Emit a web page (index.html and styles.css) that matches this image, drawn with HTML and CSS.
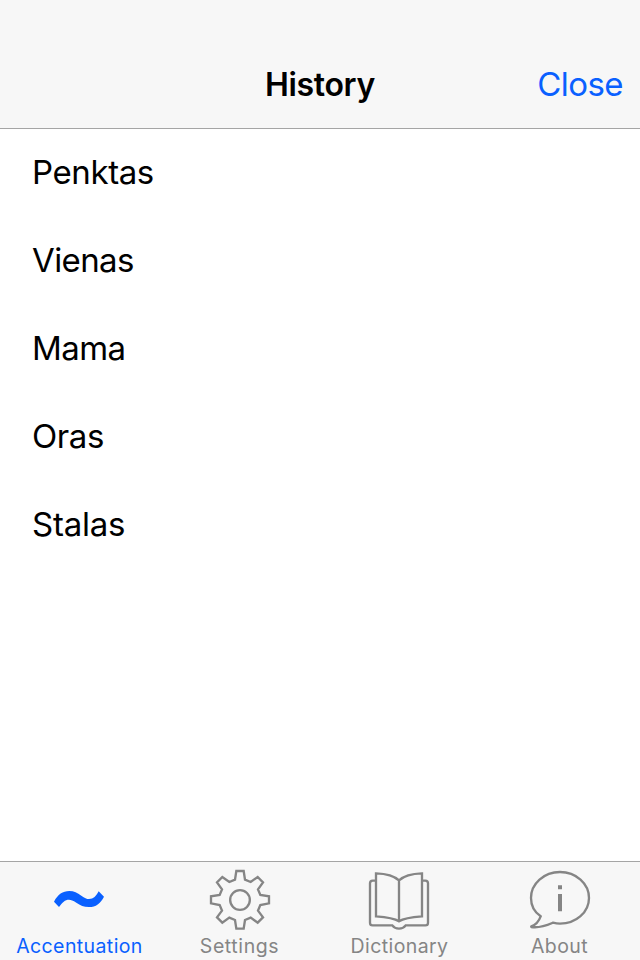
FILE: index.html
```html
<!DOCTYPE html>
<html lang="en">
<head>
<meta charset="utf-8">
<title>History</title>
<link rel="stylesheet" href="styles.css">
</head>
<body>
<div class="screen">
  <header class="navbar">
    <h1 class="title">History</h1>
    <a class="close">Close</a>
  </header>
  <ul class="list">
    <li class="row">Penktas</li>
    <li class="row vienas">Vienas</li>
    <li class="row mama">Mama</li>
    <li class="row">Oras</li>
    <li class="row stalas">Stalas</li>
  </ul>
  <nav class="tabbar">
    <a class="tab active">
      <svg class="icon" viewBox="144 39 192 192"><path fill="currentColor" d="M162 140C174 118 188 108 208 108C222 108 232 114 244 122C254 129 260 132 267 132C281 132 288 124 296 109L312 125C301 146 288 156 267 156C251 156 241 151 229 143C219 136 213 134 207 134C195 134 187 142 177 156Z"/></svg>
      <span class="label">Accentuation</span>
    </a>
    <a class="tab">
      <svg class="icon outline" viewBox="144 39 192 192"><path d="M229 48H251L255 74L272 81L293 66L309 82L294 103L301 120L327 124V145L301 150L294 167L309 187L293 203L272 188L255 195L251 221H229L225 195L208 188L187 203L171 187L186 167L179 150L153 145V124L179 120L186 103L171 82L187 66L208 81L225 74Z"/><circle cx="240" cy="135" r="29.5"/></svg>
      <span class="label settings">Settings</span>
    </a>
    <a class="tab">
      <svg class="icon outline" viewBox="144 39 192 192"><path d="M237 76C222 62 198 56 168 55V184C198 186 221 188 237 199C253 188 276 186 306 184V55C276 56 252 62 237 76V199"/><path d="M168 77H158Q150 77 150 85V203Q150 211 158 211H217Q224 221 237 221Q250 221 257 211H316Q324 211 324 203V85Q324 77 316 77H306"/></svg>
      <span class="label">Dictionary</span>
    </a>
    <a class="tab">
      <svg class="icon outline" viewBox="144 39 192 192"><path d="M182 184C163 171 153 151 153 129C153 86 192 51 240 51S327 86 327 129S288 206 240 206Q230 206 219 203C203 210 182 220 154 216Q153 215 154 214C168 209 177 198 182 184Z"/><path class="solid" d="M234 91H246V103H234ZM234 117H246V169H234Z"/></svg>
      <span class="label">About</span>
    </a>
  </nav>
</div>
</body>
</html>
```
FILE: styles.css
```css
* { box-sizing: border-box; }
body { margin: 0; font-family: Inter, "Liberation Sans", sans-serif; background: #fff; color: #000; }
.screen { width: 640px; height: 960px; display: flex; flex-direction: column; }
.navbar { height: 129px; padding: 40px 17px 0; display: grid; grid-template-columns: 1fr auto 1fr; align-items: center; background: #f7f7f7; border-bottom: 1px solid #a5a5a5; }
.title { grid-column: 2; margin: 0; padding-top: 2px; font-size: 32px; font-weight: 600; line-height: 40px; letter-spacing: -0.35px; }
.close { justify-self: end; font-size: 33px; line-height: 40px; color: #0a60ff; letter-spacing: -0.55px; }
.list { flex: 1; margin: 0; padding: 0; list-style: none; }
.row { height: 88px; padding-left: 32px; font-size: 33px; line-height: 87px; letter-spacing: -0.4px; }
.vienas, .mama { letter-spacing: -0.6px; }
.stalas { letter-spacing: -0.25px; }
.tabbar { height: 99px; display: grid; grid-template-columns: repeat(4, 1fr); background: #f7f7f7; border-top: 1px solid #a5a5a5; }
.tab { display: flex; flex-direction: column; align-items: center; padding-top: 6px; color: #858585; }
.active { color: #0a60ff; }
.icon { width: 64px; height: 64px; flex: none; }
.outline { fill: none; stroke: currentColor; stroke-width: 7; }
.solid { fill: currentColor; stroke: none; }
.label { font-size: 19.5px; line-height: 24px; margin-top: 2px; padding-right: 1px; letter-spacing: 0.4px; }
.settings { letter-spacing: 0.6px; }
```
